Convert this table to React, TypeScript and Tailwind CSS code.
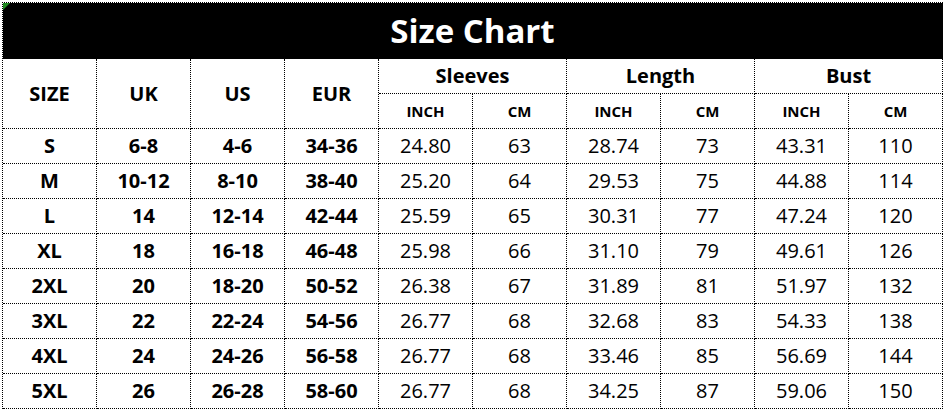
const rows: [string, string, string, string, string, string, string, string, string, string][] = [
  ["S", "6-8", "4-6", "34-36", "24.80", "63", "28.74", "73", "43.31", "110"],
  ["M", "10-12", "8-10", "38-40", "25.20", "64", "29.53", "75", "44.88", "114"],
  ["L", "14", "12-14", "42-44", "25.59", "65", "30.31", "77", "47.24", "120"],
  ["XL", "18", "16-18", "46-48", "25.98", "66", "31.10", "79", "49.61", "126"],
  ["2XL", "20", "18-20", "50-52", "26.38", "67", "31.89", "81", "51.97", "132"],
  ["3XL", "22", "22-24", "54-56", "26.77", "68", "32.68", "83", "54.33", "138"],
  ["4XL", "24", "24-26", "56-58", "26.77", "68", "33.46", "85", "56.69", "144"],
  ["5XL", "26", "26-28", "58-60", "26.77", "68", "34.25", "87", "59.06", "150"],
];

const cell = "flex items-center justify-center border-r border-b border-dotted border-black";

export default function App() {
  return (
    <div className="h-[410px] w-[946px] bg-white pl-[2px] pt-[2px] font-['Open_Sans',sans-serif] text-black">
      <div className="relative grid w-[941px] grid-cols-[repeat(10,94px)] grid-rows-[56px_35px_35px_repeat(8,35px)] border-l border-t border-dotted border-black">
        <div className="pointer-events-none absolute left-0 top-0 h-0 w-0 border-r-[7px] border-t-[7px] border-r-transparent border-t-[#1f8a1f]" />
        <div className={`${cell} col-span-10 bg-black text-[33px] font-bold text-white`}>Size Chart</div>

        <div className={`${cell} row-span-2 text-[20px] font-bold`}>SIZE</div>
        <div className={`${cell} row-span-2 text-[20px] font-bold`}>UK</div>
        <div className={`${cell} row-span-2 text-[20px] font-bold`}>US</div>
        <div className={`${cell} row-span-2 text-[20px] font-bold`}>EUR</div>
        <div className={`${cell} col-span-2 text-[20px] font-bold`}>Sleeves</div>
        <div className={`${cell} col-span-2 text-[20px] font-bold`}>Length</div>
        <div className={`${cell} col-span-2 text-[20px] font-bold`}>Bust</div>

        {["INCH", "CM", "INCH", "CM", "INCH", "CM"].map((h, i) => (
          <div key={i} className={`${cell} text-[15px] font-bold`}>
            {h}
          </div>
        ))}

        {rows.map((r) =>
          r.map((v, i) => (
            <div key={r[0] + i} className={`${cell} text-[20px] ${i < 4 ? "font-bold" : "font-normal"}`}>
              {v}
            </div>
          )),
        )}
      </div>
    </div>
  );
}
